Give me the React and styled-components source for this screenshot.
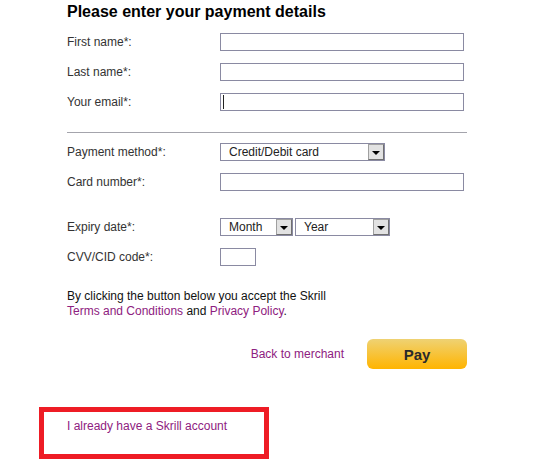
import React from "react";
import styled, { createGlobalStyle } from "styled-components";

const GlobalStyle = createGlobalStyle`
  body {
    margin: 0;
    background: #fff;
    font-family: "Liberation Sans", Arial, sans-serif;
  }
`;

const Page = styled.div`
  padding: 0 0 0 67px;
  width: 400px;
`;

const Title = styled.h1`
  font-size: 16px;
  font-weight: bold;
  color: #000;
  margin: 0;
  height: 27px;
  line-height: 24px;
`;

const Row = styled.div`
  display: grid;
  grid-template-columns: 153px 1fr;
  align-items: center;
  height: 30px;
  margin-top: ${(p) => p.gap || 0}px;
`;

const Label = styled.label`
  font-size: 12px;
  color: #333;
`;

const Field = styled.div`
  position: relative;
  width: ${(p) => p.width || 244}px;
  height: 18px;
  box-sizing: border-box;
  border: 1px solid #8a8aa2;
  background: #fff;
`;

const Caret = styled.span`
  position: absolute;
  left: 2px;
  top: 1px;
  width: 1px;
  height: 14px;
  background: #222;
`;

const Divider = styled.hr`
  border: 0;
  border-top: 1px solid #a4a4ac;
  margin: 15px 0 4px;
`;

const Selects = styled.div`
  display: flex;
  gap: 2px;
`;

const Select = styled.div`
  display: flex;
  align-items: center;
  justify-content: space-between;
  width: ${(p) => p.width}px;
  height: 18px;
  box-sizing: border-box;
  border: 1px solid #8a8aa2;
  padding: 0 0 0 8px;
  font-size: 12px;
  color: #222;
`;

const Arrow = styled.span`
  display: flex;
  align-items: center;
  justify-content: center;
  width: 16px;
  height: 16px;
  box-sizing: border-box;
  background: #e2e2e2;
  border: 1px solid #a0a0a0;
  border-right-color: #707070;
  border-bottom-color: #707070;
  &::after {
    content: "";
    border-left: 4px solid transparent;
    border-right: 4px solid transparent;
    border-top: 4px solid #000;
    margin-top: 2px;
  }
`;

const Note = styled.p`
  font-size: 12px;
  line-height: 15px;
  color: #111;
  margin: 17px 0 0;
`;

const Link = styled.a`
  color: #8e2080;
  text-decoration: none;
  font-size: 12px;
`;

const Actions = styled.div`
  display: flex;
  justify-content: flex-end;
  align-items: center;
  gap: 23px;
  margin-top: 20px;
`;

const PayButton = styled.button`
  width: 100px;
  height: 30px;
  border: 0;
  border-radius: 6px;
  background: linear-gradient(#efd273, #ffb400);
  font-family: "Liberation Sans", Arial, sans-serif;
  font-size: 15px;
  font-weight: bold;
  color: #2a2a2a;
`;

const AccountBox = styled.div`
  width: 230px;
  height: 52px;
  box-sizing: border-box;
  border: 5px solid #ee1c25;
  margin: 38px 0 0 39px;
  padding: 4px 0 0 23px;
`;

const Dropdown = ({ width, children }) => (
  <Select width={width}>
    <span>{children}</span>
    <Arrow />
  </Select>
);

export default function App() {
  return (
    <>
      <GlobalStyle />
      <Page>
        <Title>Please enter your payment details</Title>
        <Row>
          <Label>First name*:</Label>
          <Field />
        </Row>
        <Row>
          <Label>Last name*:</Label>
          <Field />
        </Row>
        <Row>
          <Label>Your email*:</Label>
          <Field>
            <Caret />
          </Field>
        </Row>
        <Divider />
        <Row>
          <Label>Payment method*:</Label>
          <Dropdown width={165}>Credit/Debit card</Dropdown>
        </Row>
        <Row>
          <Label>Card number*:</Label>
          <Field />
        </Row>
        <Row gap={15}>
          <Label>Expiry date*:</Label>
          <Selects>
            <Dropdown width={73}>Month</Dropdown>
            <Dropdown width={95}>Year</Dropdown>
          </Selects>
        </Row>
        <Row>
          <Label>CVV/CID code*:</Label>
          <Field width={36} />
        </Row>
        <Note>
          By clicking the button below you accept the Skrill
          <br />
          <Link href="#">Terms and Conditions</Link> and{" "}
          <Link href="#">Privacy Policy</Link>.
        </Note>
        <Actions>
          <Link href="#">Back to merchant</Link>
          <PayButton>Pay</PayButton>
        </Actions>
      </Page>
      <AccountBox>
        <Link href="#">I already have a Skrill account</Link>
      </AccountBox>
    </>
  );
}
